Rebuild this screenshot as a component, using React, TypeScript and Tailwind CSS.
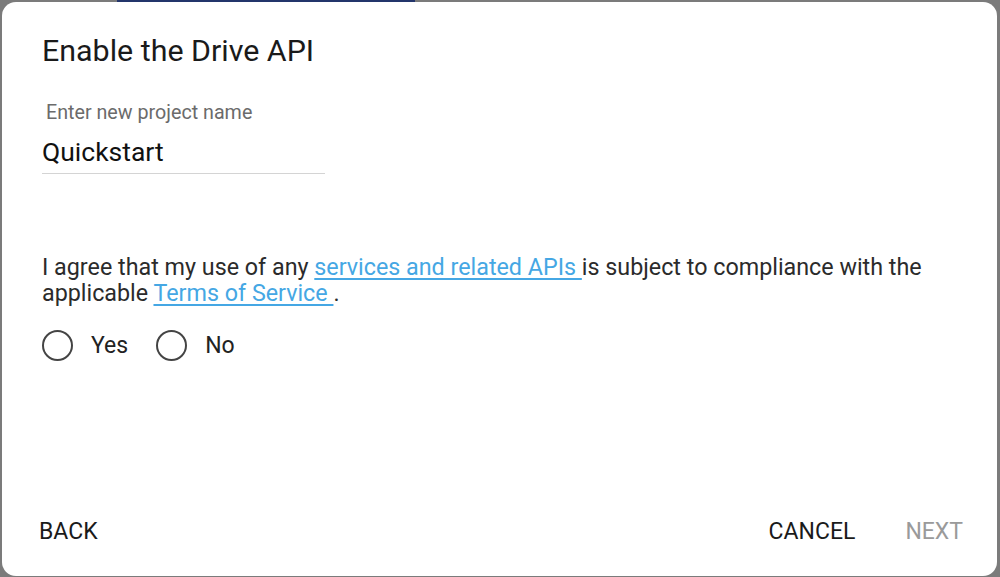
import { useState } from 'react';

// --- Radio option ---
const RadioOption = ({ label, checked, onSelect }: { label: string; checked: boolean; onSelect: () => void }) => (
  <label className="flex items-center cursor-pointer" onClick={onSelect}>
    <span className="w-[31px] h-[31px] rounded-full border-[2.5px] border-[#444] flex items-center justify-center">
      {checked && <span className="w-[15px] h-[15px] rounded-full bg-[#444]"></span>}
    </span>
    <span className="ml-[18px] text-[23px] leading-[28px] text-[#222]">{label}</span>
  </label>
);

export default function App() {
  const [projectName, setProjectName] = useState('Quickstart');
  const [agree, setAgree] = useState<'yes' | 'no' | null>(null);

  return (
    <div className="h-[577px] w-[1000px] bg-[#7b7b7b] flex flex-col pl-[2px] pr-[3px] pb-[1px] font-['Roboto',sans-serif]">
      <div className="h-[2px] flex shrink-0">
        <div className="ml-[115px] w-[298px] bg-[#23356b]"></div>
      </div>

      <div className="flex-grow bg-white rounded-[14px] flex flex-col px-[40px]">
        <h1 className="mt-[31px] text-[30.4px] leading-[36px] text-[#1a1a1a]">Enable the Drive API</h1>

        <div className="mt-[32px] w-[283px]">
          <label className="block pl-[4px] text-[19.7px] leading-[24px] text-[#6b6b6b]">Enter new project name</label>
          <input
            value={projectName}
            onChange={(e) => setProjectName(e.target.value)}
            className="mt-[12px] w-full text-[26.5px] leading-[30px] pb-[6px] text-[#111] border-b border-[#d4d4d4] outline-none bg-transparent"
          />
        </div>

        <p className="mt-[80px] text-[23.3px] leading-[26px] text-[#2b2b2b]">
          I agree that my use of any{' '}
          <a href="#" className="text-[#45a7e4] underline underline-offset-[3px]">services and related APIs </a>
          is subject to compliance with the applicable{' '}
          <a href="#" className="text-[#45a7e4] underline underline-offset-[3px]">Terms of Service </a>.
        </p>

        <div className="mt-[24px] flex items-center gap-[28px]">
          <RadioOption label="Yes" checked={agree === 'yes'} onSelect={() => setAgree('yes')} />
          <RadioOption label="No" checked={agree === 'no'} onSelect={() => setAgree('no')} />
        </div>

        <div className="mt-auto mb-[30px] -ml-[3px] -mr-[6px] flex items-center">
          <button className="text-[23px] leading-[28px] text-[#1a1a1a]">BACK</button>
          <div className="ml-auto flex items-center gap-[50px]">
            <button className="text-[23px] leading-[28px] text-[#1a1a1a]">CANCEL</button>
            <button className="text-[23px] leading-[28px] text-[#9a9a9a]" disabled={agree !== 'yes'}>NEXT</button>
          </div>
        </div>
      </div>
    </div>
  );
}
